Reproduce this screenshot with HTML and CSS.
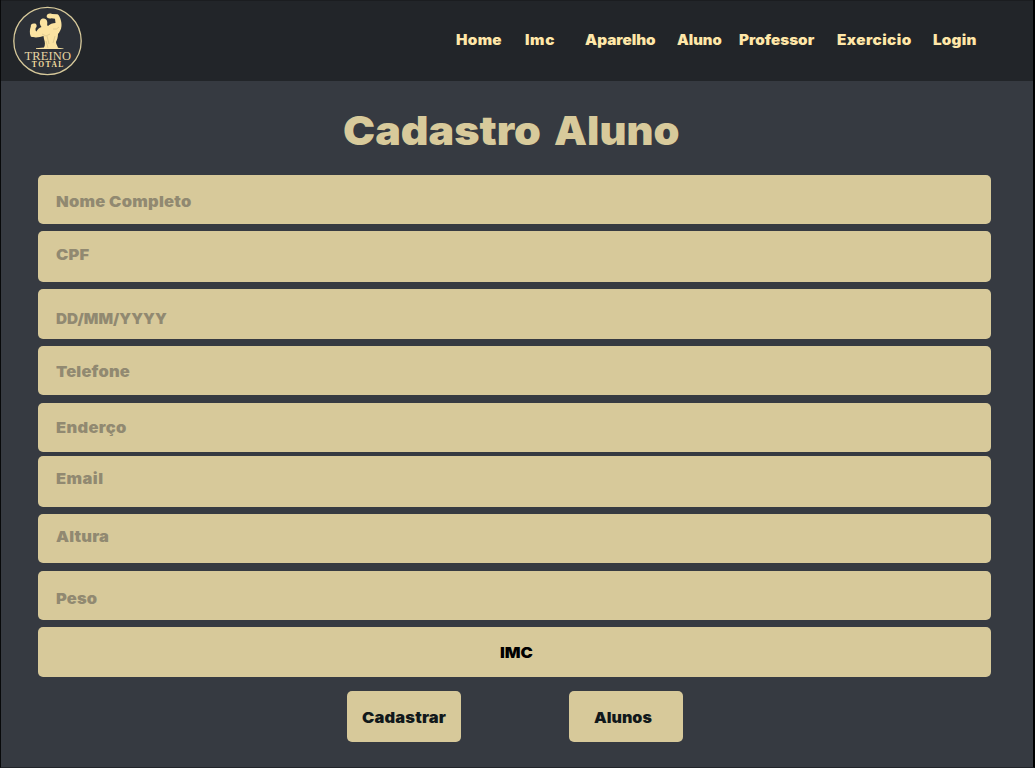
FILE: index.html
```
<!DOCTYPE html>
<html lang="pt-BR">
<head>
<meta charset="utf-8">
<title>Treino Total - Cadastro Aluno</title>
<link rel="stylesheet" href="styles.css">
</head>
<body>
<div class="page">
  <header class="header">
    <svg class="logo" viewBox="0 0 70 70" role="img" aria-label="Treino Total">
      <circle class="logo-ring" cx="34.500" cy="35" r="33.700"/>
      <path class="logo-figure" d="M23 42.200 L31 41.400 C32.500 39 32 36 31 33 L30.500 30 C27 31.500 21 32 17.800 30.500 C16.300 27 16.800 23.500 17.800 20.500 C17.500 18 19.500 17 22 17.500 C24 18 24.200 21 22.700 22 C22.300 23.500 22.500 25 23.500 25.500 C24.500 23.500 26 21.800 28.500 21 C26 18 26.500 14 29 12.800 C31.500 11.800 34.300 13.500 34.300 16.500 C34.300 18.500 33.800 19.500 35 20 C37 18 39.500 17 42.500 17 L42 12.700 L38.500 12.300 C36 13 33.200 12 33.700 9.800 C34.300 7.500 37 7 39 8 L44.500 8.300 C46.500 9 49 16 48.500 20 C48.300 23.500 46.500 26 45 28 C45 31 44 34 43 36 C43 38 44.500 40 45 41.700 L50.500 42.400 L50.500 43 L23 43 Z"/>
      <path class="logo-line" d="M29 28 L33 30 L37 28 M34 30 L36 38 M33 35 L35 42 M40 23 Q44 24 46 21 M42 30 L40 37"/>
      <text class="logo-name" x="11.500" y="53.800" textLength="46.500">TREINO</text>
      <text class="logo-sub" x="18.800" y="61" textLength="31.500">TOTAL</text>
    </svg>
    <nav class="nav">
      <a class="home">Home</a><a class="imc">Imc</a><a class="aparelho">Aparelho</a><a class="aluno">Aluno</a><a class="professor">Professor</a><a class="exercicio">Exercicio</a><a class="login">Login</a>
    </nav>
  </header>
  <main class="main">
    <h1 class="title"><span class="title-main">Cadastro</span><span class="title-sub">Aluno</span></h1>
    <form class="form">
      <div class="field nome"><span>Nome Completo</span></div>
      <div class="field cpf"><span>CPF</span></div>
      <div class="field data"><span>DD/MM/YYYY</span></div>
      <div class="field telefone"><span>Telefone</span></div>
      <div class="field endereco"><span>Enderço</span></div>
      <div class="field email"><span>Email</span></div>
      <div class="field altura"><span>Altura</span></div>
      <div class="field peso"><span>Peso</span></div>
      <div class="field resultado"><span>IMC</span></div>
      <div class="actions">
        <button type="button" class="button cadastrar"><span>Cadastrar</span></button>
        <button type="button" class="button alunos"><span>Alunos</span></button>
      </div>
    </form>
  </main>
</div>
</body>
</html>
```
FILE: styles.css
```
* { box-sizing: border-box; }
body { margin: 0; background: #000; font-family: "Inter", "Liberation Sans", sans-serif; font-weight: 900; }
.page { width: 1035px; height: 768px; overflow: hidden; background: #363a41; border-left: 1px solid #08090a; border-right: 2px solid #000; border-bottom: 1px solid #22252a; }
.header { display: flex; height: 81px; background: #222529; border-top: 1px solid #1b1d20; padding-left: 12px; }
.logo { width: 70px; height: 70px; margin-top: 5px; flex: none; }
.logo-ring { fill: #2c3037; stroke: #d8ca9b; stroke-width: 1.3; }
.logo-figure { fill: #fbe3a1; }
.logo-line { fill: none; stroke: #b9a878; stroke-width: .4; }
.logo-name { font: 400 12.5px "Liberation Serif", serif; fill: #e6d5a2; }
.logo-sub { font: 700 7.5px "Liberation Serif", serif; fill: #f5dfa0; }

.nav { display: grid; grid-template-columns: 69px 60px 92px 62px 98px 96px 60px; margin-left: 372.5px; padding-top: 29px; font-size: 14px; line-height: 20px; color: #ffe7a8; }
.nav a { transform-origin: left; transform: scaleX(1.09); }
.nav .home { letter-spacing: .3px; }
.nav .imc { letter-spacing: .6px; }
.nav .aluno { transform: scaleX(1.06); }
.nav .exercicio { letter-spacing: .4px; }
.nav .login { letter-spacing: .2px; }

.title { display: flex; margin: 0; padding: 28px 0 0 342px; height: 94px; font-size: 40px; line-height: 43px; font-weight: 900; color: #d8ca9b; white-space: nowrap; }
.title span { transform-origin: left; }
.title-main { transform: scaleX(1.075); }
.title-sub { margin-left: 27px; transform: scaleX(1.04); }

.form { width: 953px; margin-left: 37px; }
.field { height: 49px; margin-bottom: 7px; padding-left: 18px; border-radius: 5px; background: #d7c99a; color: #918971; font-size: 15px; line-height: 20px; }
.field span, .button span { display: inline-block; transform-origin: left; transform: scaleX(1.1); letter-spacing: .15px; }
.nome { padding-top: 17px; }
.field.nome span { letter-spacing: .22px; }
.cpf { height: 51px; padding-top: 14px; }
.data { height: 50px; padding-top: 20px; }
.field.data span { transform: scaleX(1.02); letter-spacing: 0; }
.telefone { padding-top: 16px; margin-bottom: 8px; }
.endereco { padding-top: 15px; margin-bottom: 4px; }
.field.endereco span { letter-spacing: .3px; }
.email { height: 51px; padding-top: 13px; }
.field.email span { letter-spacing: .4px; }
.altura { padding-top: 13px; margin-bottom: 8px; }
.peso { padding-top: 18px; }
.resultado { height: 50px; padding: 16px 0 0 462px; color: #000; margin-bottom: 14px; }
.field.resultado span { letter-spacing: 0; }

.actions { display: flex; gap: 108px; padding-left: 309px; }
.button { width: 114px; height: 51px; padding: 2px 0 0 15px; border: 0; border-radius: 5px; background: #d7c99a; color: #11181b; font: inherit; font-size: 15px; text-align: left; }
.alunos { padding-left: 25px; }
.button.alunos span { transform: scaleX(1.07); letter-spacing: 0; }
```
